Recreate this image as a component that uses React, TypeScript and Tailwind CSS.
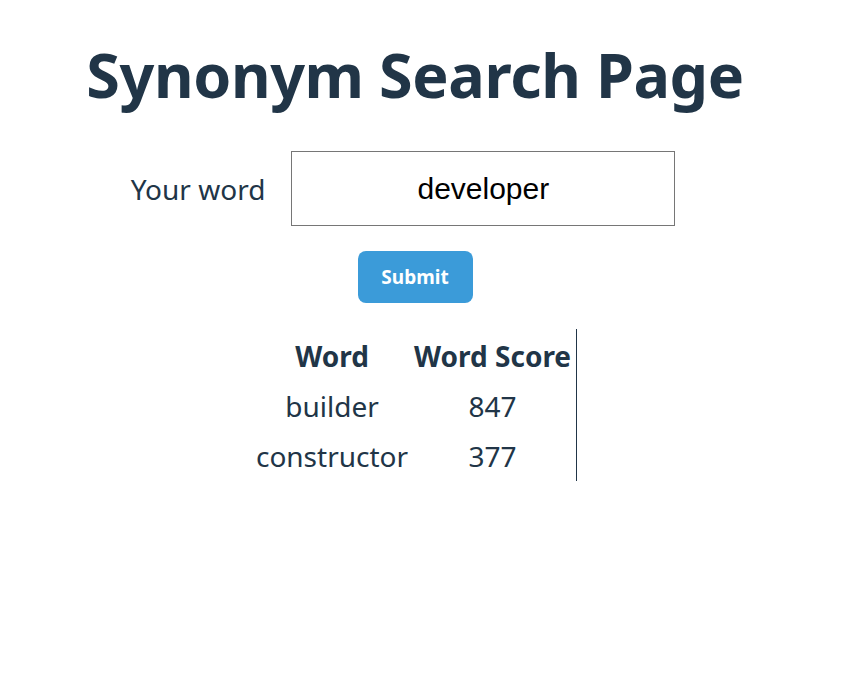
import React from "react";

export default function App() {
  const rows = [
    { w: "builder", s: 847 },
    { w: "constructor", s: 377 },
  ];
  return (
    <div
      className="w-[830px] flex flex-col items-center text-[#213547]"
      style={{ fontFamily: '"Noto Sans", "Open Sans", sans-serif' }}
    >
      <h1 className="mt-[30px] text-[61px] leading-[90px] font-bold tracking-[-0.4px]">
        Synonym Search Page
      </h1>
      <div className="mt-[31px] flex items-center gap-[26px] pr-[24px]">
        <label className="text-[28px] leading-[40px]">Your word</label>
        <input
          defaultValue="developer"
          className="w-[384px] h-[75px] border border-[#767676] text-center text-[30px] text-black outline-none"
          style={{ fontFamily: '"Liberation Sans", Arial, sans-serif' }}
        />
      </div>
      <button className="mt-[25px] w-[115px] h-[52px] rounded-[8px] bg-[#3b9bd9] text-white text-[19px] font-bold">
        Submit
      </button>
      <table className="mt-[26px] ml-[1px] border-r border-[#213547] text-[28px] leading-[50px]">
        <thead>
          <tr>
            <th className="font-bold pl-[2px] pr-[3px] pt-[2px]">Word</th>
            <th className="font-bold pl-[3px] pr-[5px] pt-[2px]">Word Score</th>
          </tr>
        </thead>
        <tbody>
          {rows.map((r) => (
            <tr key={r.w}>
              <td className="text-center pl-[2px] pr-[3px]">{r.w}</td>
              <td className="text-center pl-[3px] pr-[5px]">{r.s}</td>
            </tr>
          ))}
        </tbody>
      </table>
    </div>
  );
}
